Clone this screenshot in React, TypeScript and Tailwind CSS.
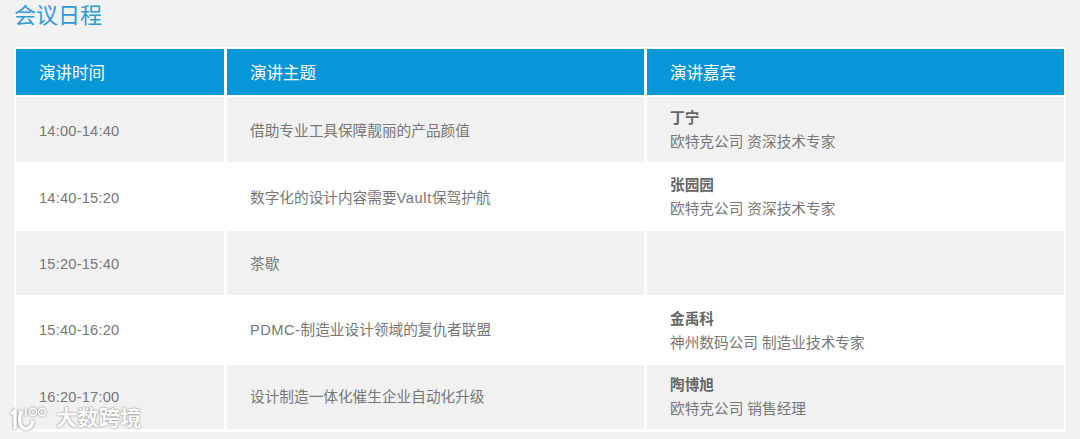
import React from "react";

const rows = [
    { time: "14:00-14:40", topic: <>借助专业工具保障靓丽的产品颜值</>, name: "丁宁", title: "欧特克公司 资深技术专家", h: "h-[65px]", bg: "bg-[#f1f1f1]", nudge: "pt-[2px]", nameNudge: "" },
    { time: "14:40-15:20", topic: <>数字化的设计内容需要<span className="tracking-[0.6px]">Vault</span>保驾护航</>, name: "张园园", title: "欧特克公司 资深技术专家", h: "h-[67px]", bg: "bg-white", nudge: "pt-[2px]", nameNudge: "" },
    { time: "15:20-15:40", topic: <>茶歇</>, name: "", title: "", h: "h-[64px]", bg: "bg-[#f1f1f1]", nudge: "pt-[2px]", nameNudge: "" },
    { time: "15:40-16:20", topic: <><span className="tracking-[0.5px]">PDMC-</span>制造业设计领域的复仇者联盟</>, name: "金禹科", title: "神州数码公司 制造业技术专家", h: "h-[68px]", bg: "bg-white", nudge: "", nameNudge: "pt-[2px]" },
    { time: "16:20-17:00", topic: <>设计制造一体化催生企业自动化升级</>, name: "陶博旭", title: "欧特克公司 销售经理", h: "h-[64px]", bg: "bg-[#f1f1f1]", nudge: "", nameNudge: "" },
];

const App = () => {
    return (
        <div className="relative h-[439px] w-[1080px] overflow-hidden bg-[#f2f2f2] font-['Liberation_Sans','Noto_Sans_CJK_SC',sans-serif]">
            <h1 className="ml-[14px] pt-[2px] text-[22px] leading-[28px] text-[#2f9bd6]">会议日程</h1>

            <div className="ml-[14px] mt-[17px] w-[1052px] bg-white px-[2px] pb-[3px] pt-[2px]">
                {/* Header */}
                <div className="grid h-[46px] grid-cols-[208px_417px_417px] gap-x-[3px] text-[16.5px] text-white">
                    <div className="flex items-center bg-[#0796d8] pl-[23px] pt-[2px]">演讲时间</div>
                    <div className="flex items-center bg-[#0796d8] pl-[23px] pt-[2px]">演讲主题</div>
                    <div className="flex items-center bg-[#0796d8] pl-[23px] pt-[2px]">演讲嘉宾</div>
                </div>

                {/* Rows */}
                <div className="mt-[2px] flex flex-col gap-y-[1px] text-[14.67px] text-[#777777]">
                    {rows.map((row) => (
                        <div key={row.time} className={`grid grid-cols-[208px_417px_417px] gap-x-[3px] ${row.h}`}>
                            <div className={`flex items-center pl-[23px] tracking-[0.2px] ${row.bg} ${row.nudge}`}>{row.time}</div>
                            <div className={`flex items-center pl-[23px] ${row.bg} ${row.nudge}`}>{row.topic}</div>
                            <div className={`flex flex-col justify-center pl-[23px] ${row.bg} ${row.nameNudge}`}>
                                {row.name && <p className="font-bold leading-[24px] text-[#666666]">{row.name}</p>}
                                {row.title && <p className="leading-[24px]">{row.title}</p>}
                            </div>
                        </div>
                    ))}
                </div>
            </div>

            {/* Watermark */}
            <div className="absolute left-[9px] top-[403px] flex items-center gap-[9px] text-white">
                <svg width="38" height="30" viewBox="0 0 38 30" fill="none" stroke="white" strokeWidth="3.4" className="drop-shadow-[0_0_1px_#777777]">
                    <path d="M2 11 L6 8 V26" />
                    <path d="M13 8 C9 14 10 24 16 25.5 C20 26.5 23 23 24 18" />
                    <path d="M17 5 V13" strokeWidth="1.6" />
                    <circle cx="24" cy="9" r="3.6" strokeWidth="1.6" />
                    <circle cx="33" cy="9" r="3.6" strokeWidth="1.6" />
                </svg>
                <span className="text-[21px] font-bold leading-[28px] tracking-[0.4px] [text-shadow:0_0_2px_#666666]">大数跨境</span>
            </div>
        </div>
    );
};

export default App;
